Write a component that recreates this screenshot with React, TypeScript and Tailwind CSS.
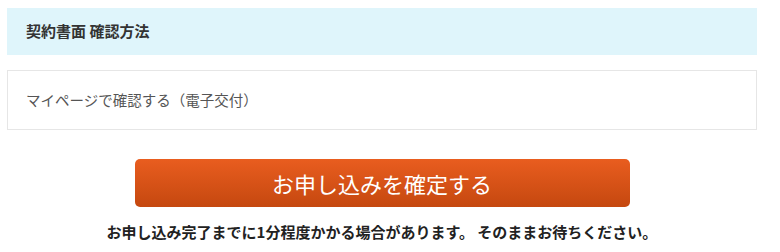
import React from "react";

const font = { fontFamily: '"Noto Sans CJK JP", "Noto Sans", sans-serif' };

const ConfirmSection: React.FC = () => {
  return (
    <div className="w-[757px] pl-[7px] pt-[8px]" style={font}>
      <div className="flex h-[47px] items-center bg-[#dff5fb] px-[19px] text-[15px] font-bold text-[#333]">
        契約書面 確認方法
      </div>

      <div className="mt-[15px] flex h-[60px] items-center border border-[#e6e6e6] px-[18px] text-[14.5px] text-[#555]">
        マイページで確認する（電子交付）
      </div>

      <div className="mt-[29px] flex justify-center">
        <button
          type="button"
          className="flex h-[48px] w-[495px] items-center justify-center rounded-[5px] bg-gradient-to-b from-[#e95d1f] to-[#c5480f] text-[22px] text-white"
        >
          お申し込みを確定する
        </button>
      </div>

      <p className="mt-[14px] text-center text-[15px] leading-[22px] font-bold text-[#222]">
        お申し込み完了までに1分程度かかる場合があります。 そのままお待ちください。
      </p>
    </div>
  );
};

export default function App() {
  return (
    <div className="min-h-[252px] bg-white">
      <ConfirmSection />
    </div>
  );
}
